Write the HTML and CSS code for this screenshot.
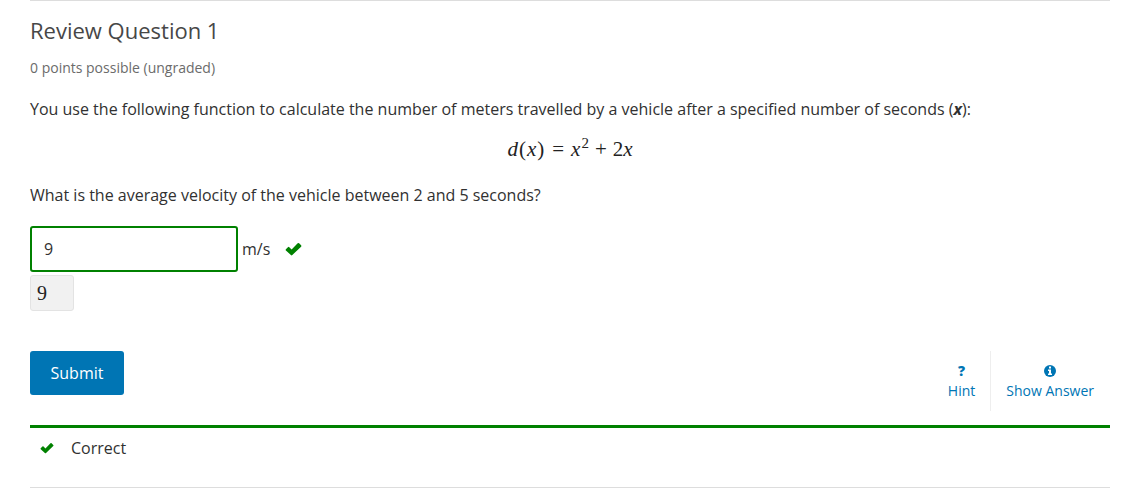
FILE: index.html
```
<!DOCTYPE html>
<html lang="en">
<head>
<meta charset="utf-8">
<title>Review Question 1</title>
<link rel="stylesheet" href="styles.css">
</head>
<body>
<main class="problem">
  <h1 class="title">Review Question 1</h1>
  <p class="progress">0 points possible (ungraded)</p>
  <form class="question">
    <p class="text">You use the following function to calculate the number of meters travelled by a vehicle after a specified number of seconds (<b><i>x</i></b>):</p>
    <p class="formula"><i>d</i><span class="paren">(</span><i>x</i><span class="paren">)</span><span class="rel">=</span><i>x</i><sup>2</sup><span class="op">+</span>2<i>x</i></p>
    <label class="text" for="answer">What is the average velocity of the vehicle between 2 and 5 seconds?</label>
    <div class="answer">
      <input class="field" id="answer" type="text" value="9">
      <span class="unit">m/s</span>
      <svg class="check" viewBox="0 0 17 14" role="img" aria-label="Correct"><path d="M.9 7.2 2.9 5.200Q3.600 4.500 4.300 5.200L6.600 7.500 12.700 1.300Q13.400.600 14.100 1.300L16.100 3.300Q16.800 4 16.100 4.700L7.300 13.100Q6.600 13.800 5.900 13.100L.9 8.600Q.2 7.900.9 7.200Z"/></svg>
    </div>
    <output class="preview" for="answer">9</output>
    <div class="actions">
      <button class="submit" type="button">Submit</button>
      <div class="tools">
        <button class="tool" type="button"><span class="mark">?</span>Hint</button>
        <button class="tool" type="button"><svg class="info" viewBox="0 0 12 12"><circle cx="6" cy="6" r="6"/><path d="M5 1.500h2v2H5zM4 4.500h3v4h1V10H4V8.500h1V6H4z"/></svg>Show Answer</button>
      </div>
    </div>
  </form>
  <div class="status"><svg class="check small" viewBox="0 0 17 14"><path d="M.9 7.2 2.9 5.200Q3.600 4.500 4.300 5.200L6.600 7.500 12.700 1.300Q13.400.600 14.100 1.300L16.100 3.300Q16.800 4 16.100 4.700L7.300 13.100Q6.600 13.800 5.900 13.100L.9 8.600Q.2 7.900.9 7.200Z"/></svg>Correct</div>
</main>
</body>
</html>
```
FILE: styles.css
```
* { box-sizing: border-box; }
body { margin: 0; background: #fff; color: #313131; font: 16px/26px "Open Sans", sans-serif; }
.problem { margin: 0 35px 0 30px; border-top: 1px solid #ddd; border-bottom: 1px solid #ddd; padding-top: 15px; }
.title { margin: 0; font-size: 22px; line-height: 28px; font-weight: 400; color: #474747; }
.progress { margin: 14px 0 0; font-size: 14px; line-height: 20px; color: #6b6b6b; }
.text { display: block; margin: 18px 0 0; }
.formula { margin: 14px 0 0; text-align: center; font: 21px/26px "Liberation Serif", serif; color: #222; }
.formula sup { margin-left: 1px; font-size: 15px; line-height: 0; }
.paren { margin: 0 1px; }
.rel { margin: 0 7px; }
.op { margin: 0 6px; }
.formula + .text { margin-top: 20px; }
.answer { display: flex; align-items: center; margin-top: 18px; }
.field { width: 208px; height: 46px; border: 2px solid #008100; border-radius: 3px; padding: 0 12px; font: inherit; color: #313131; background: #fff; }
.unit { margin-left: 4px; }
.check { width: 17px; height: 14px; margin-left: 15px; fill: #008100; }
.preview { display: block; width: 44px; height: 36px; margin-top: 3px; border: 1px solid #e3e3e3; border-radius: 3px; padding: 0 6px; background: #f1f1f1; font: 20px/34px "Liberation Serif", serif; color: #222; }
.actions { display: flex; justify-content: space-between; align-items: flex-start; margin-top: 40px; }
.submit { border: 0; border-radius: 3px; width: 94px; height: 44px; background: #0075b4; color: #fff; font: inherit; }
.tools { display: flex; }
.tool { display: flex; flex-direction: column; align-items: center; justify-content: center; height: 60px; border: 0; padding: 0 15px; background: none; color: #0075b4; font: 14px/20px "Open Sans", sans-serif; }
.tool + .tool { border-left: 1px solid #eee; padding-right: 16px; }
.mark { font-weight: 800; }
.info { width: 12px; height: 12px; margin: 4px 0; fill: #0075b4; }
.info path { fill: #fff; }
.status { display: flex; align-items: center; margin-top: 14px; border-top: 3px solid #008100; padding: 7px 0 26px 10px; }
.small { width: 14px; height: 12px; margin: 0 17px 0 0; }
```
